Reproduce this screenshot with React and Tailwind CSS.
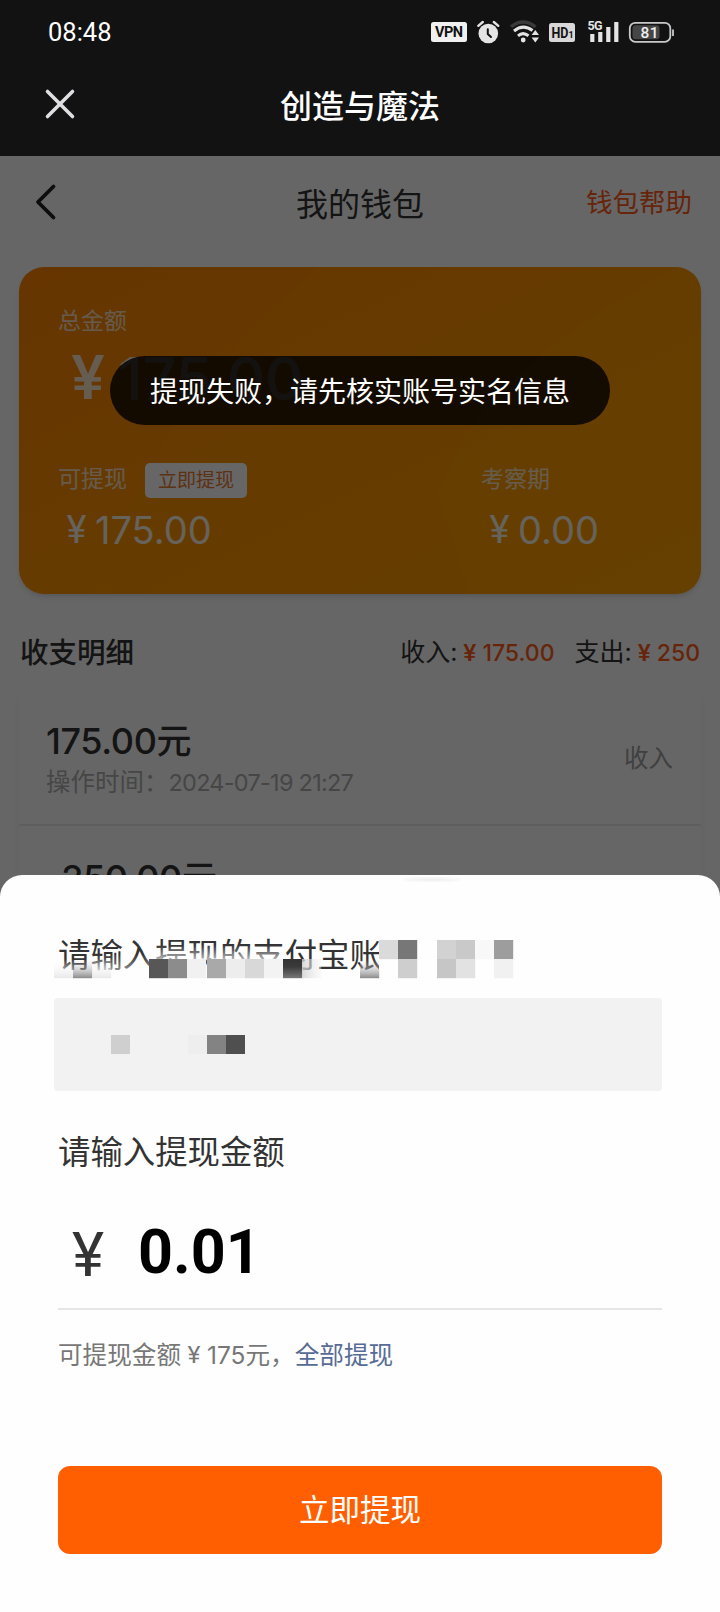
import { X } from "lucide-react";

const records = [
  { id: 1, amount: "175.00", time: "2024-07-19 21:27", type: "收入" },
  { id: 2, amount: "-250.00" },
];

// [x, y, fill] of the tiles that hide the account name
const labelTiles = [
  [0, 19, "url(#tileSoft)"],
  [19, 19, "url(#tileMid)"],
  [38, 19, "url(#tileSoft)"],
  [95, 19, "#575757"],
  [114, 19, "#8c8c8c"],
  [133, 19, "#f1f1f1"],
  [153, 19, "#a9a9a9"],
  [172, 19, "#ededed"],
  [191, 19, "#d8d8d8"],
  [210, 19, "#f3f3f3"],
  [229, 19, "url(#tileDark)"],
  [248, 19, "url(#tileLight)"],
  [306, 19, "url(#tileMid)"],
  [325, 0, "#dadada"],
  [344, 0, "#777777"],
  [344, 19, "#cecece"],
  [383, 0, "#d2d2d2"],
  [402, 0, "#c9c9c9"],
  [383, 19, "#c6c6c6"],
  [402, 19, "#e2e2e2"],
  [421, 0, "#f8f8f8"],
  [440, 0, "#9d9d9d"],
  [440, 19, "#f1f1f1"],
];

const inputTiles = ["w-[57px]", "w-[19px] bg-[#cfcfcf]", "w-[58px]", "w-[19px] bg-[#eeeeee]", "w-[19px] bg-[#838383]", "w-[19px] bg-[#4f4f4f]"];

function StatusBar() {
  return (
    <div className="flex h-16 items-center justify-between pl-12 pr-[46px] text-white">
      <span className="pt-0.5 font-[Roboto] text-[25.5px] leading-none">08:48</span>
      <svg width="243" height="26" viewBox="0 0 243 26" fill="none" className="text-[#e4e4e4]">
        {/* vpn */}
        <rect x="0" y="3" width="36" height="20" rx="2.5" fill="#f0f0f0" />
        <text x="18" y="18.3" fontSize="14.5" fontWeight="700" fontFamily="Roboto" textAnchor="middle" fill="#121212" textLength="28">VPN</text>
        {/* alarm */}
        <circle cx="57.3" cy="14.5" r="9.8" fill="currentColor" />
        <path d="M47.3 6.8 L51.8 3 M62.8 3 L67.3 6.8" stroke="currentColor" strokeWidth="2.4" strokeLinecap="round" />
        <path d="M56.8 10.3 V15 L60 18" stroke="#121212" strokeWidth="2" strokeLinecap="round" />
        {/* wifi */}
        <path d="M80 7.8 Q92 -2 104.5 7.8" stroke="#3a3a3a" strokeWidth="3.4" />
        <path d="M83 12 Q92 4.5 101.5 11.5" stroke="currentColor" strokeWidth="3" />
        <path d="M87 16.8 Q92 12.5 97.5 16.8" stroke="currentColor" strokeWidth="3" />
        <circle cx="92.2" cy="21" r="2.4" fill="currentColor" />
        <path d="M104.3 11 L108 16 H100.6 Z M100.6 18.5 H108 L104.3 23.5 Z" fill="currentColor" />
        {/* hd */}
        <rect x="118" y="4" width="26" height="19" rx="2.5" fill="#d8d8d8" />
        <text x="120.5" y="18.8" fontSize="14.5" fontWeight="700" fontFamily="Roboto" fill="#121212" textLength="17" lengthAdjust="spacingAndGlyphs">HD</text>
        <text x="137.5" y="18.8" fontSize="9" fontWeight="700" fontFamily="Roboto" fill="#121212">1</text>
        {/* signal */}
        <text x="156.5" y="11" fontSize="12.5" fontWeight="700" fontFamily="Roboto" fill="#e4e4e4" textLength="15">5G</text>
        <path d="M161.3 15 V23 M169.3 13 V23 M177.3 8 V23 M185.3 3 V23" stroke="currentColor" strokeWidth="4.2" />
        {/* battery */}
        <rect x="198.8" y="3.8" width="40.5" height="19" rx="5.5" stroke="#c9c9c9" strokeWidth="1.8" />
        <rect x="201.5" y="6.3" width="27" height="14" rx="3" fill="#464646" />
        <path d="M242 10.5 V17" stroke="#c9c9c9" strokeWidth="1.8" />
        <text x="218.5" y="18.8" fontSize="15.5" fontWeight="500" fontFamily="Roboto" textAnchor="middle" fill="#eeeeee" textLength="18">81</text>
      </svg>
    </div>
  );
}

function BalanceCard() {
  return (
    <section className="relative mx-[19px] mt-[23px] h-[327px] overflow-hidden rounded-[25px] bg-linear-to-br from-[#ff8500] via-[#ff9400] to-[#ffa000] pl-[39px] pt-10 text-white shadow-md">
      <svg className="absolute inset-0" width="682" height="327" viewBox="0 0 682 327">
        <path d="M300 0 C190 90 110 200 90 327 H450 L418 228 C450 130 540 40 640 0 Z" fill="#ff9500" opacity="0.35" />
        <path d="M452 327 L418 228 C450 130 560 50 660 0 H682 V327 Z" fill="#ffa300" opacity="0.35" />
      </svg>
      <div className="relative">
        <p className="text-[23px] leading-7 opacity-75">总金额</p>
        <p className="mt-2 flex h-[70px] items-center text-[59px] font-medium leading-none opacity-80">
          <span className="w-[60px] text-center font-[Roboto] text-[62px]">¥</span>175.00
        </p>
        <div className="mt-[48px] flex">
          <div className="w-[423px]">
            <div className="flex h-[38px] items-center text-[23px]">
              <span className="mb-0.5 opacity-75">可提现</span>
              <button className="ml-[18px] flex h-[35px] w-[102px] items-center justify-center rounded-[5px] bg-white pt-0.5 text-[19px] text-[#e87b30]">立即提现</button>
            </div>
            <Amount value="175.00" />
          </div>
          <div>
            <div className="flex h-[38px] items-center text-[23px]">
              <span className="mb-0.5 opacity-75">考察期</span>
            </div>
            <Amount value="0.00" />
          </div>
        </div>
      </div>
    </section>
  );
}

function Amount({ value }) {
  return (
    <p className="mt-[11px] flex h-10 items-center text-[38px] leading-none opacity-90">
      <span className="w-[37px] text-center font-[Roboto]">¥</span>{value}
    </p>
  );
}

function Summary({ label, value }) {
  return (
    <span className="flex items-center">
      {label}:
      <span className="flex items-center text-[23px] font-medium text-[#ff5b1c]">
        <span className="w-[25px] text-center font-[Roboto] text-[24.5px]">¥</span>{value}
      </span>
    </span>
  );
}

function WithdrawSheet() {
  return (
    <section className="absolute inset-x-0 bottom-0 h-[737px] rounded-t-[22px] bg-[#fefefe] px-[58px] pt-[60px] text-[#333333]">
      <div className="absolute left-[403px] top-0.5 h-[5px] w-[58px] rounded-full bg-radial from-[#eeeeee] to-[#fefefe]" />
      <div className="relative h-[42px]">
        <h2 className="text-[32.4px] leading-[42px]">请输入提现的支付宝账</h2>
        <svg className="absolute -left-1 top-[5px]" width="462" height="39" viewBox="0 0 462 39">
          <defs>
            <linearGradient id="fade" x1="0" y1="0" x2="0" y2="1">
              <stop offset="0" stopColor="#fefefe" stopOpacity="0" />
              <stop offset="1" stopColor="#fefefe" stopOpacity="0.65" />
            </linearGradient>
            <linearGradient id="tileSoft" x1="0" y1="0" x2="0" y2="1">
              <stop offset="0" stopColor="#ffffff" stopOpacity="0" />
              <stop offset="1" stopColor="#e8e8e8" />
            </linearGradient>
            <linearGradient id="tileMid" x1="0" y1="0" x2="0" y2="1">
              <stop offset="0" stopColor="#dddddd" stopOpacity="0" />
              <stop offset="1" stopColor="#8a8a8a" />
            </linearGradient>
            <linearGradient id="tileDark" x1="0" y1="0" x2="0" y2="1">
              <stop offset="0" stopColor="#333333" />
              <stop offset="0.4" stopColor="#3a3a3a" />
              <stop offset="1" stopColor="#777777" />
            </linearGradient>
            <linearGradient id="tileLight" x1="0" y1="0" x2="1" y2="0">
              <stop offset="0" stopColor="#d0d0d0" stopOpacity="0.8" />
              <stop offset="1" stopColor="#f4f4f4" stopOpacity="0.4" />
            </linearGradient>
          </defs>
          <rect x="36" y="14" width="59" height="24" fill="url(#fade)" />
          <rect x="95" y="5" width="134" height="15" fill="url(#fade)" />
          <rect x="325" y="0" width="19" height="39" fill="#fefefe" />
          {labelTiles.map(([x, y, fill]) => (
            <rect key={`${x}-${y}`} x={x} y={y} width="19.2" height="19.2" fill={fill} />
          ))}
        </svg>
      </div>
      <div className="-ml-1 mt-[21px] flex h-[93px] items-center rounded bg-[#f2f2f2]">
        {inputTiles.map((tile, i) => (
          <span key={i} className={`h-[19px] ${tile}`} />
        ))}
      </div>
      <h2 className="mt-[41px] text-[32.4px] leading-[42px]">请输入提现金额</h2>
      <div className="mt-[28px] flex h-[108px] items-center border-b-2 border-[#e6e6e6]">
        <span className="w-[60px] text-center font-[Roboto] text-[61px] leading-none">¥</span>
        <span className="mb-1.5 ml-5 font-[Roboto] text-[61px] font-bold leading-none text-black">0.01</span>
      </div>
      <p className="mt-[27px] flex h-9 items-center text-[24.6px] text-[#777777]">
        可提现金额<span className="w-[26px] text-center font-[Roboto]">¥</span>
        <span className="font-[Inter] text-[24.5px]">175</span>元，
        <a className="text-[#576b95]">全部提现</a>
      </p>
      <button className="mt-[93px] flex h-[88px] w-full items-center justify-center rounded-xl bg-[#ff5f00] text-[30.5px] text-white">立即提现</button>
    </section>
  );
}

export default function App() {
  return (
    <div className="relative h-[1612px] w-[720px] overflow-hidden bg-white font-[Inter,'Noto_Sans_CJK_SC',sans-serif] text-[#333333]">
      <header className="h-[156px] bg-[#121212]">
        <StatusBar />
        <div className="grid h-[86px] grid-cols-[1fr_auto_1fr] items-center text-white">
          <X className="mb-1.5 ml-[35px] text-[#dedee3]" size={50} strokeWidth={1.7} />
          <h1 className="text-[32px] font-medium">创造与魔法</h1>
        </div>
      </header>

      <main className="relative h-[744px] overflow-hidden">
        <div className="grid h-[88px] grid-cols-[1fr_auto_1fr] items-center">
          <svg className="ml-[33px] mt-1" width="24" height="40" viewBox="0 0 24 40" fill="none" stroke="#222222" strokeWidth="3.8" strokeLinecap="round" strokeLinejoin="round">
            <path d="M20.5 4.5 L5 20 L20.5 35.5" />
          </svg>
          <h2 className="mt-2.5 text-[32px]">我的钱包</h2>
          <a className="mr-7 mt-1.5 text-right text-[26.5px] text-[#ff5b1c]">钱包帮助</a>
        </div>

        <BalanceCard />

        <div className="mx-5 mt-9 flex h-[46px] items-center justify-between">
          <h3 className="text-[28.5px] font-medium">收支明细</h3>
          <div className="flex gap-5 text-[25px]">
            <Summary label="收入" value="175.00" />
            <Summary label="支出" value="250" />
          </div>
        </div>

        <div className="mx-[19px] mt-[13px] rounded-2xl bg-white shadow-[0_4px_10px_rgba(0,0,0,0.06)]">
          {records.map((r) => (
            <div key={r.id} className="flex h-[137px] justify-between border-b-2 border-[#ececec] pl-[27px] pr-7">
              <div className="pt-[29px]">
                <p className="text-[36px] font-medium leading-[46px] tracking-[-0.4px]">
                  {r.amount}<span className="text-[35px]">元</span>
                </p>
                {r.time && (
                  <p className="text-[24.5px] leading-9 text-[#b0b0b0]">
                    操作时间：<span className="text-[23.5px] tracking-[-0.75px]">{r.time}</span>
                  </p>
                )}
              </div>
              {r.type && <span className="self-center pt-1 text-[24.5px] text-[#a0a0a0]">{r.type}</span>}
            </div>
          ))}
        </div>

        <div className="absolute inset-0 bg-black/60" />
      </main>

      <div className="absolute left-[110px] top-[356px] flex h-[69px] w-[500px] items-center justify-center rounded-full bg-black/80 pt-[3px] text-[28px] text-white">
        提现失败，请先核实账号实名信息
      </div>

      <WithdrawSheet />
    </div>
  );
}
